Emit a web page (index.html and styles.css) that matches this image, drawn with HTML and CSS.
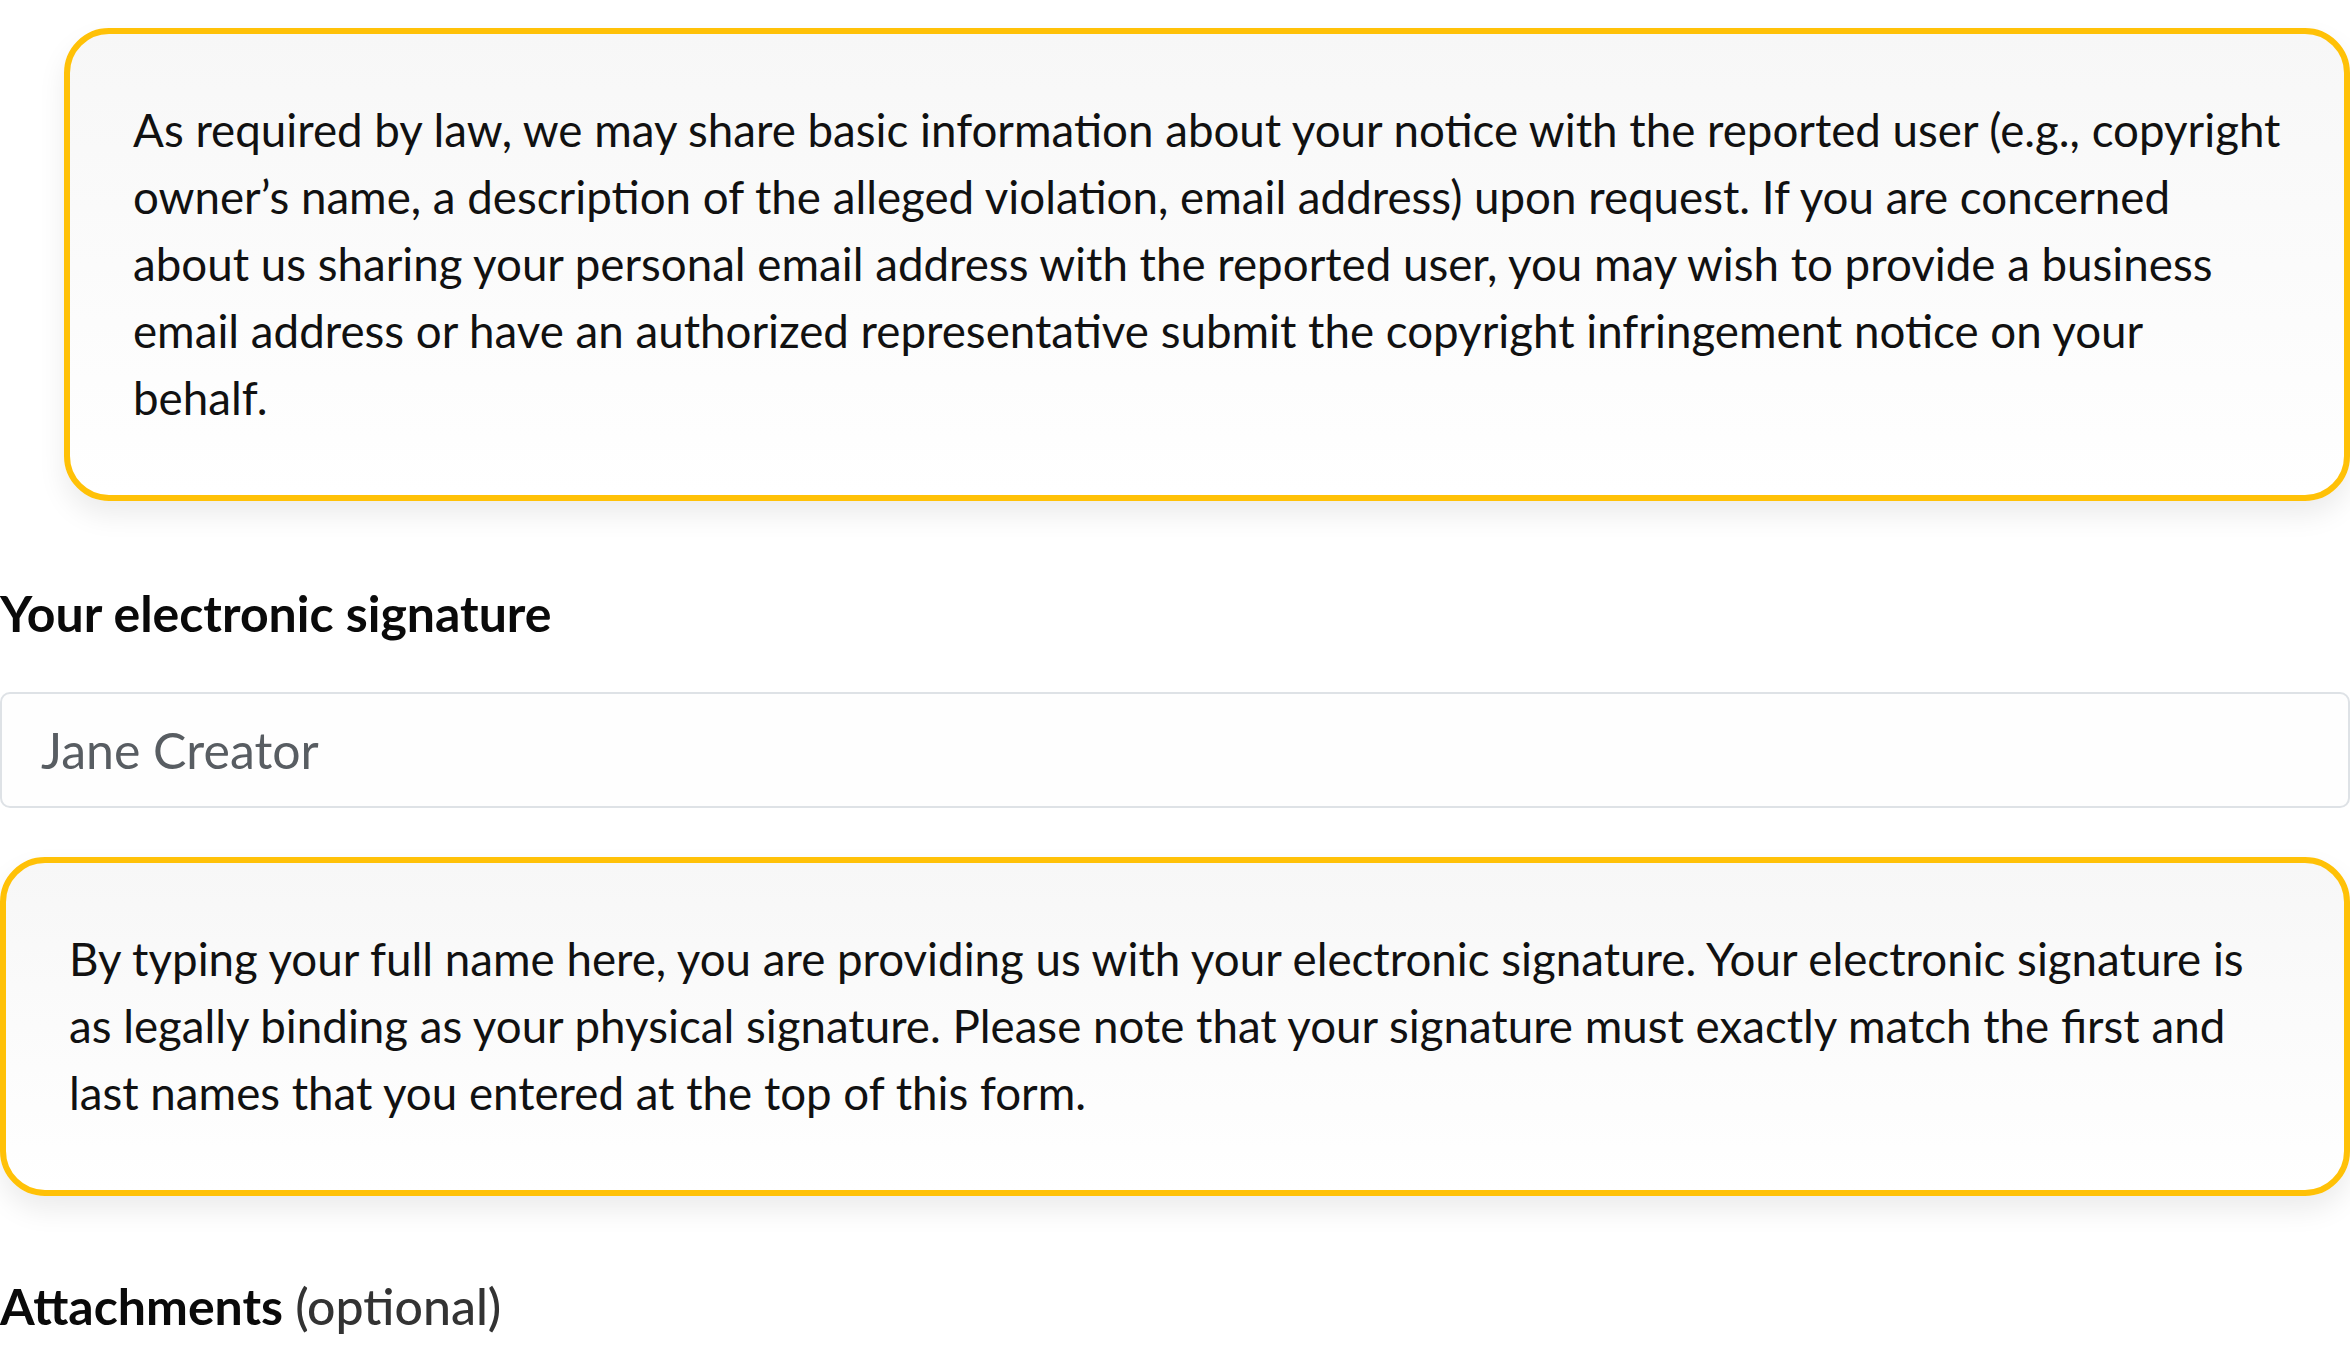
FILE: index.html
```html
<!DOCTYPE html>
<html lang="en">
<head>
<meta charset="utf-8">
<title>Copyright notice</title>
<link rel="stylesheet" href="styles.css">
</head>
<body>
<div class="page">
  <div class="notice notice-indented">
    <p>As required by law, we may share basic information about your notice with the reported user (e.g., copyright owner’s name, a description of the alleged violation, email address) upon request. If you are concerned about us sharing your personal email address with the reported user, you may wish to provide a business email address or have an authorized representative submit the copyright infringement notice on your behalf.</p>
  </div>

  <h2 class="field-label">Your electronic signature</h2>
  <input class="text-input" type="text" placeholder="Jane Creator">

  <div class="notice">
    <p>By typing your full name here, you are providing us with your electronic signature. Your electronic signature is as legally binding as your physical signature. Please note that your signature must exactly match the first and last names that you entered at the top of this form.</p>
  </div>

  <h2 class="field-label attach-label">Attachments <span class="optional">(optional)</span></h2>
</div>
</body>
</html>
```

FILE: styles.css
```css
html, body {
  margin: 0;
  padding: 0;
  background: #ffffff;
}

body {
  font-family: Lato, "Noto Sans", "Liberation Sans", sans-serif;
  color: #111111;
  overflow: hidden;
}

.page {
  display: flex;
  flex-direction: column;
  padding-top: 28px;
}

.notice {
  border: 6px solid #ffc107;
  border-radius: 45px;
  background: linear-gradient(#f7f7f7, #ffffff);
  box-shadow: 0 14px 28px rgba(0, 0, 0, 0.08);
  padding: 62px 60px 64px 63px;
}

.notice-indented {
  margin-left: 64px;
}

.notice p {
  margin: 0;
  font-size: 45.7px;
  line-height: 67px;
  color: #111111;
}

.field-label {
  margin: 82px 0 49px;
  font-size: 50px;
  font-weight: 700;
  line-height: 60px;
  color: #0a0a0a;
}

.text-input {
  box-sizing: border-box;
  width: 100%;
  height: 116px;
  margin: 0 0 49px;
  border: 2px solid #dee2e6;
  border-radius: 10px;
  padding: 0 39px;
  font-family: Lato, "Noto Sans", "Liberation Sans", sans-serif;
  font-size: 50px;
  background: #fefefe;
  outline: none;
}

.text-input::placeholder {
  color: #585d62;
}

.attach-label {
  margin-top: 80px;
}

.optional {
  font-weight: 500;
  color: #333333;
}
```
